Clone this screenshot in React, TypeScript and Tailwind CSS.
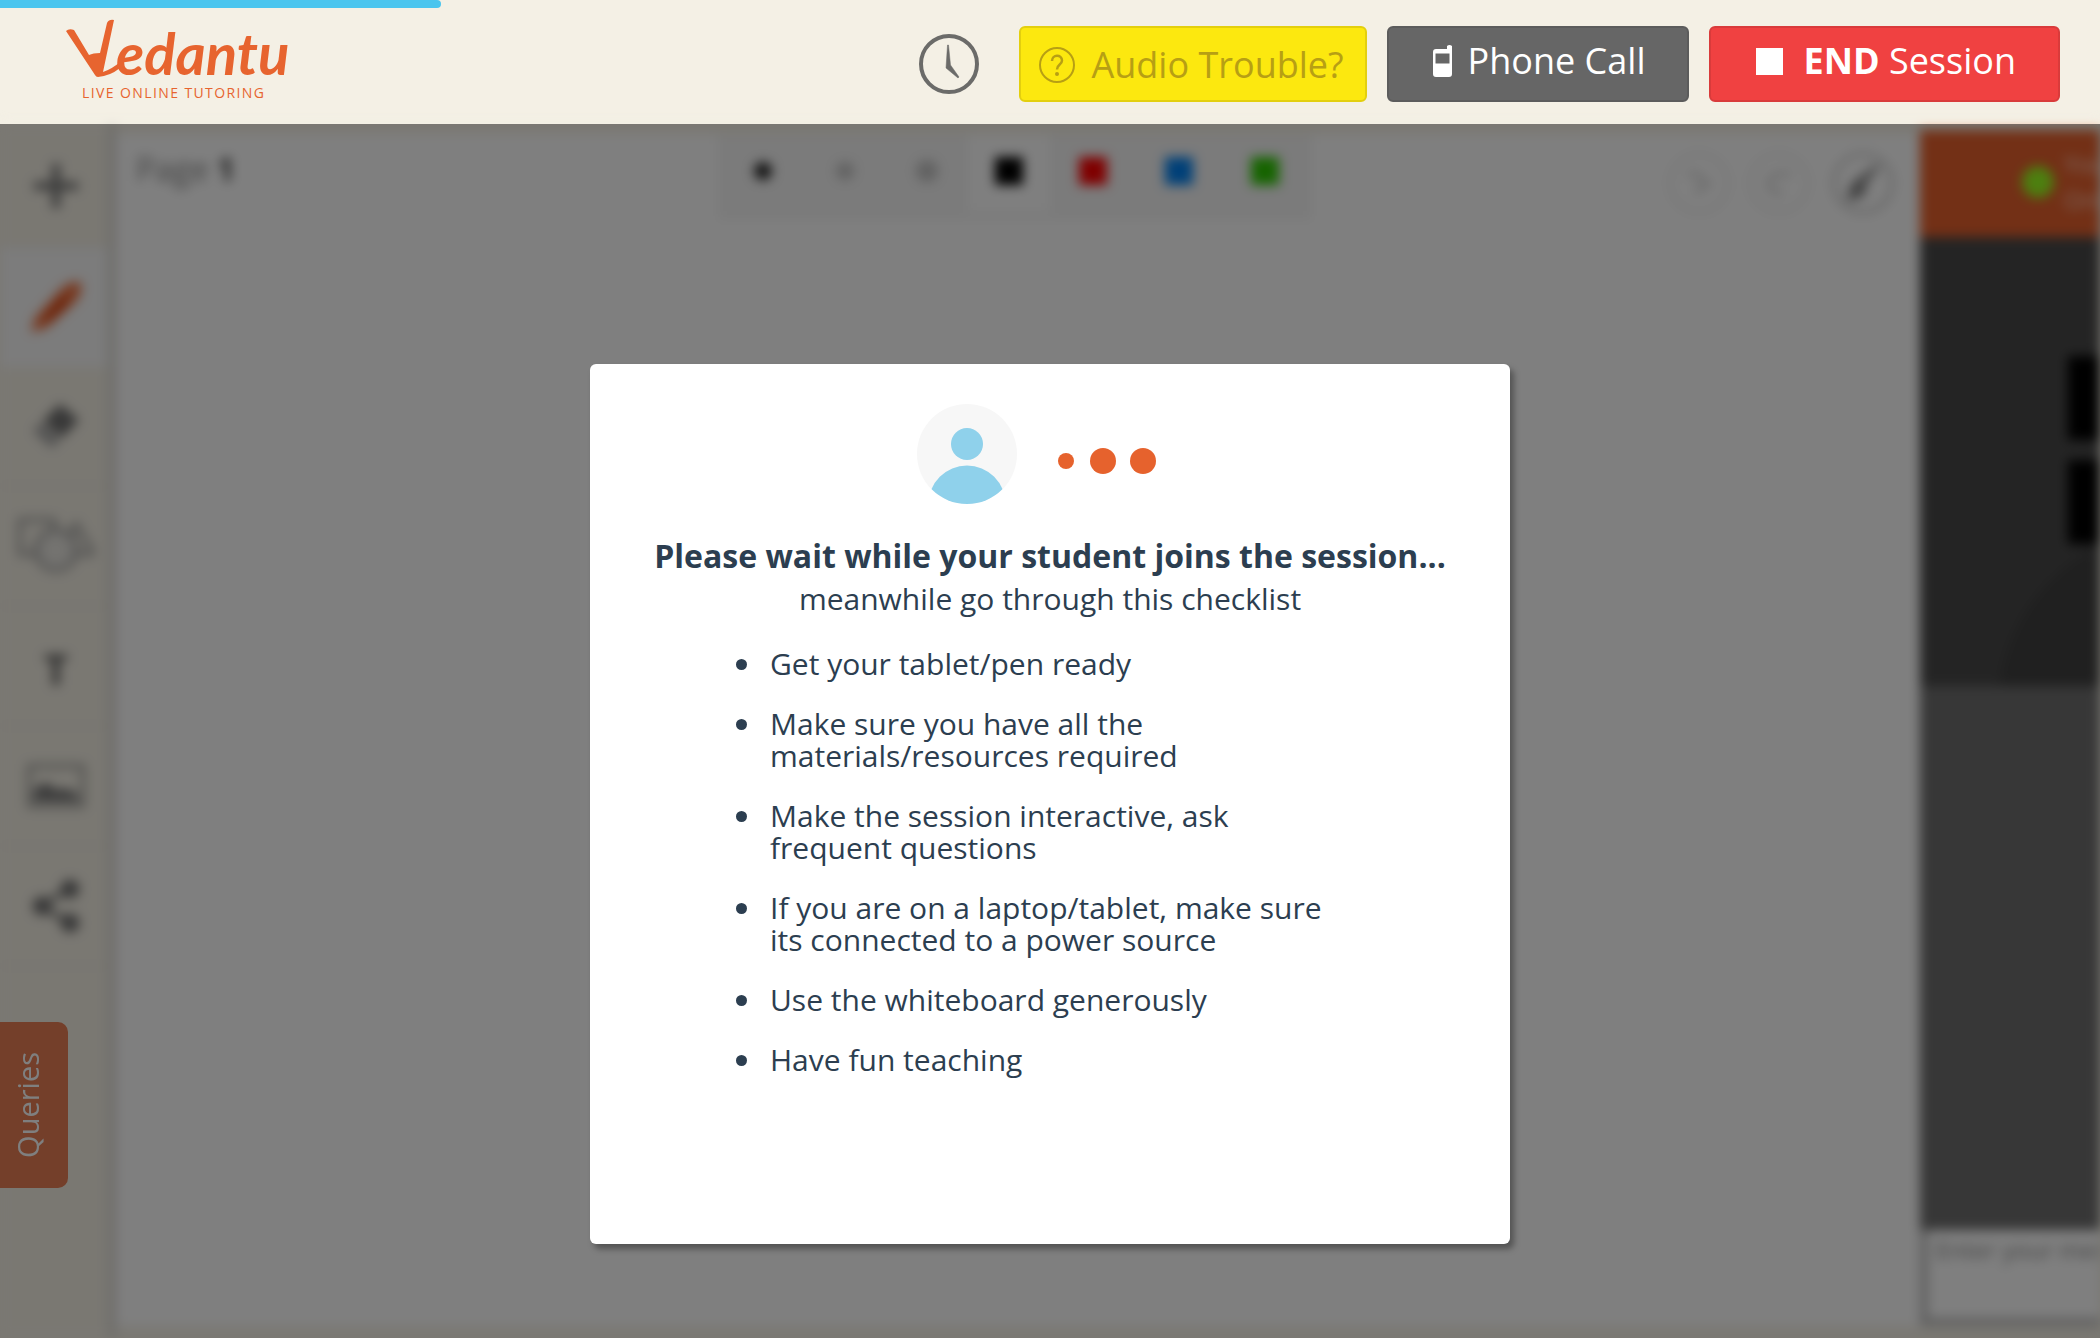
import React from "react";

const steps = [
  "Get your tablet/pen ready",
  "Make sure you have all the materials/resources required",
  "Make the session interactive, ask frequent questions",
  "If you are on a laptop/tablet, make sure its connected to a power source",
  "Use the whiteboard generously",
  "Have fun teaching",
];

function Logo() {
  return (
    <a href="#" aria-label="Vedantu live online tutoring" className="flex flex-col text-[#e7642f]">
      <span className="flex h-16 items-start">
        <svg viewBox="0 0 54 60" className="h-[60px] w-[54px]" fill="currentColor" aria-hidden="true">
          <path d="M0 12 Q3 9 8 11 L23 36 Q27 34 34 34 L41 4 Q43 0 48 1 L37 53 Q46 50 54 43 L54 49 Q44 57 32 58 Q30 58 29 56 Z" />
        </svg>
        <span className="-ml-1 font-[Lato] text-[58px] leading-[68px] font-bold italic">edantu</span>
      </span>
      <span className="pl-4 text-sm leading-5 font-medium tracking-widest">LIVE ONLINE TUTORING</span>
    </a>
  );
}

function ClockIcon() {
  return (
    <svg viewBox="0 0 60 60" className="size-[60px]" aria-hidden="true">
      <circle cx="30" cy="30" r="28" fill="none" stroke="#6b6b69" strokeWidth="4" />
      <path d="M28.500 11 L29.500 11 L31.500 31 L40 43 L39 44 L27 34 Z" fill="#6b6b69" stroke="#6b6b69" strokeWidth="0.500" strokeLinejoin="round" />
    </svg>
  );
}

function Header() {
  return (
    <header className="flex h-[124px] shrink-0 items-start justify-between bg-[#f4f0e5] pr-10 pl-[66px]">
      <div className="pt-[19px]">
        <Logo />
      </div>
      <div className="flex items-center gap-5 pt-[26px]">
        <div className="mr-5">
          <ClockIcon />
        </div>
        <button className="flex h-[76px] items-center gap-4 rounded-md border-2 border-[#e3cf0e] bg-[#fce80f] pt-0.5 pr-[21px] pl-[18px] text-4xl text-[#b79f14]">
          <svg viewBox="0 0 36 36" className="size-9" fill="none" stroke="currentColor" strokeWidth="2" aria-hidden="true">
            <circle cx="18" cy="18" r="17" />
            <path d="M13 14 C13 7 23 7 23 13.500 C23 18 18 17 18 22.500" strokeWidth="2.500" />
            <circle cx="18" cy="27" r="1" />
          </svg>
          Audio Trouble?
        </button>
        <button className="flex h-[76px] items-center gap-4 rounded-md border-2 border-[#5c5c5c] bg-[#666] pr-[42px] pb-1.5 pl-11 text-4xl text-white">
          <svg viewBox="0 0 19 32" className="h-8 w-[19px]" fill="currentColor" aria-hidden="true">
            <path fillRule="evenodd" d="M3 4 H14 V1 Q16.500 -1 19 1 V29 Q19 32 16 32 H3 Q0 32 0 29 V7 Q0 4 3 4 Z M2.500 8.500 V18.500 H16.500 V8.500 Z" />
          </svg>
          Phone Call
        </button>
        <button className="flex h-[76px] items-center gap-5 rounded-md border-2 border-[#d93b3b] bg-[#f04141] pr-[42px] pb-1.5 pl-[45px] text-4xl text-white">
          <span className="size-[27px] bg-white" />
          <span>
            <b>END</b> Session
          </span>
        </button>
      </div>
    </header>
  );
}

function Tool({ label, active, children }: { label: string; active?: boolean; children: React.ReactNode }) {
  return (
    <button
      aria-label={label}
      className={
        active
          ? "flex h-[120px] items-center justify-center bg-[#f8f8f8] pl-1"
          : "flex h-[120px] items-center justify-center border-b-2 border-[#ece8de] pl-1"
      }
    >
      {children}
    </button>
  );
}

function Sidebar() {
  return (
    <nav className="flex w-[116px] shrink-0 flex-col border-r-8 border-[#dcdad4] bg-[#f4f0e5] pt-[3px]">
      <Tool label="Add">
        <svg viewBox="0 0 44 44" className="size-11" fill="none" stroke="#777" strokeWidth="8">
          <path d="M22 0 V44 M0 22 H44" />
        </svg>
      </Tool>
      <Tool label="Pen" active>
        <svg viewBox="0 0 50 50" className="size-[50px]" fill="#f0713f">
          <path d="M0 50 L4 36 L32 5 Q44 -3 50 1 Q53 8 45 19 L15 46 Z" />
          <path d="M13 35 L31 13 L39 21 L19 41 Z" fill="#dc4814" />
        </svg>
      </Tool>
      <Tool label="Eraser">
        <svg viewBox="0 0 46 46" className="size-[46px]">
          <path d="M10 18 L27 1 L46 17 L29 35 Z" fill="#707070" />
          <path d="M8 20 L27 37 L19 45 L0 28 Z" fill="#a5a5a5" />
        </svg>
      </Tool>
      <Tool label="Shapes">
        <svg viewBox="0 0 76 56" className="h-14 w-[76px]" fill="none" stroke="#999" strokeWidth="4">
          <path d="M2 2 H36 V36 H2 Z" />
          <path d="M58 6 L76 36 H42 Z" />
          <circle cx="38" cy="32" r="20" fill="#e8e6e0" />
        </svg>
      </Tool>
      <Tool label="Text">
        <span className="pt-1 text-[42px] font-bold text-[#555]">T</span>
      </Tool>
      <Tool label="Image">
        <svg viewBox="0 0 58 44" className="h-11 w-[58px]">
          <path d="M2 2 H56 V42 H2 Z" fill="none" stroke="#a0a09c" strokeWidth="5" />
          <path d="M7 37 V26 L18 18 L30 26 L38 24 L51 30 V37 Z" fill="#777" />
        </svg>
      </Tool>
      <Tool label="Share">
        <svg viewBox="0 0 52 54" className="h-[54px] w-[52px]" fill="#707070" stroke="#707070">
          <path d="M12 27 L40 9 M12 27 L40 45" strokeWidth="5" />
          <circle cx="12" cy="27" r="9" />
          <circle cx="40" cy="10" r="9" />
          <circle cx="40" cy="44" r="9" />
        </svg>
      </Tool>
    </nav>
  );
}

const tip = "flex w-[82px] items-center justify-center pb-3";
const swatch = "flex w-[86px] items-center justify-center pb-3";
const round = "flex size-[60px] items-center justify-center rounded-full border-2";

function Board() {
  return (
    <section className="min-w-0 flex-1 bg-[#f4f0e5] pt-[10px] pb-3">
      <div className="grid h-full grid-cols-[1fr_auto_1fr] items-start bg-white">
        <p className="pt-3.5 pl-5 text-[32px] leading-[42px] text-[#888]">
          Page <b className="text-[#444]">1</b>
        </p>
        <div className="mr-1.5 flex h-[86px] bg-[#f6f6f6] px-1">
          <button aria-label="Thin" className={tip}><span className="size-[18px] rounded-full bg-[#222]" /></button>
          <button aria-label="Medium" className={tip}><span className="size-[18px] rounded-full bg-[#c4c4c4]" /></button>
          <button aria-label="Thick" className={tip}><span className="size-[22px] rounded-full bg-[#c4c4c4]" /></button>
          <button aria-label="Black" className="flex h-[78px] w-[82px] items-center justify-center bg-white pb-1"><span className="size-7 bg-black" /></button>
          <button aria-label="Red" className={swatch}><span className="size-7 bg-[#ff0000]" /></button>
          <button aria-label="Blue" className={swatch}><span className="size-7 bg-[#0080f0]" /></button>
          <button aria-label="Green" className={swatch}><span className="size-7 bg-[#2cc800]" /></button>
        </div>
        <div className="flex justify-end gap-5 pt-[19px] pr-[27px]">
          <button aria-label="Undo" className={round + " border-[#ddd]"}>
            <svg viewBox="0 0 28 28" className="size-7" fill="none" stroke="#dedede" strokeWidth="6"><path d="M2 5 H12 L23 15 L10 24" /></svg>
          </button>
          <button aria-label="Redo" className={round + " border-[#ddd]"}>
            <svg viewBox="0 0 28 28" className="size-7" fill="none" stroke="#dedede" strokeWidth="6"><path d="M26 5 H12 Q2 8 4 18 Q8 25 18 24" /></svg>
          </button>
          <button aria-label="Brush" className={round + " ml-1 border-[#a0a0a0]"}>
            <svg viewBox="0 0 32 36" className="h-9 w-8" fill="#888"><path d="M32 0 L16 20 L10 16 Z M2 34 Q4 16 12 17 L18 22 Q18 32 2 34 Z" stroke="#888" strokeWidth="3" /></svg>
          </button>
        </div>
      </div>
    </section>
  );
}

function VideoPanel() {
  return (
    <aside className="w-[180px] shrink-0 overflow-hidden bg-[#f4f0e5] pt-1.5 pb-3">
      <div className="flex h-full w-[400px] flex-col bg-[#c0c0c0]">
        <div className="flex h-[107px] items-center gap-2.5 bg-[#e6602c] pb-1 pl-[102px]">
          <span className="size-8 rounded-full bg-[#9aff20]" />
          <p className="text-2xl leading-9 text-[#ffd8c8]">You<br />Online</p>
        </div>
        <div className="flex h-[449px] flex-col gap-5 overflow-hidden bg-[#494949] pt-[119px]">
          <span className="ml-[148px] h-[84px] w-40 shrink-0 bg-black" />
          <span className="ml-[148px] h-[84px] w-40 shrink-0 bg-black" />
          <span className="-mt-9 ml-[78px] size-[360px] shrink-0 rounded-full bg-[#404040]" />
        </div>
        <div className="min-h-0 flex-1 bg-[#6f6f6f]" />
        <textarea
          aria-label="Message"
          placeholder="Enter your message"
          className="mx-2 mb-2 h-[88px] resize-none bg-white px-2 py-1 text-2xl placeholder:text-[#888]"
        />
      </div>
    </aside>
  );
}

function WaitingDialog() {
  return (
    <div role="dialog" aria-labelledby="wait-title" className="w-[920px] rounded-md bg-white pt-10 pb-[168px] text-[#2c3e50] shadow-[4px_5px_6px_rgba(0,0,0,0.35)]">
      <div className="flex items-center justify-center pr-7">
        <svg viewBox="0 0 100 100" className="size-[100px]" aria-hidden="true">
          <clipPath id="avatar"><circle cx="50" cy="50" r="50" /></clipPath>
          <circle cx="50" cy="50" r="50" fill="#f7f7f7" />
          <g fill="#8fd1eb" clipPath="url(#avatar)">
            <circle cx="50" cy="40" r="16" />
            <circle cx="50" cy="100" r="38.500" />
          </g>
        </svg>
        <div className="mt-3.5 ml-[41px] flex items-center gap-[14px]">
          <span className="mr-0.5 size-4 rounded-full bg-[#e6622d]" />
          <span className="size-[26px] rounded-full bg-[#e6622d]" />
          <span className="size-[26px] rounded-full bg-[#e6622d]" />
        </div>
      </div>
      <h1 id="wait-title" className="mt-[30px] text-center text-[32px] leading-[44px] font-bold">Please wait while your student joins the session...</h1>
      <p className="text-center text-[30px] leading-[42px]">meanwhile go through this checklist</p>
      <ul className="mt-7 ml-[174px] flex w-[576px] list-disc flex-col gap-7 text-[30px] leading-8">
        {steps.map((s) => (
          <li key={s} className="pl-1.5">{s}</li>
        ))}
      </ul>
    </div>
  );
}

export default function App() {
  return (
    <div className="flex min-h-screen flex-col overflow-hidden bg-[#f4f0e5] font-['Open_Sans',sans-serif]">
      <div className="relative z-10 h-0">
        <div role="progressbar" aria-label="Session progress" aria-valuenow={21} className="h-2 w-[21%] rounded-r-full bg-[#4ac5ee]" />
      </div>
      <Header />
      <div className="relative flex flex-1 flex-col">
        <main className="flex flex-1 blur-[6px]">
          <Sidebar />
          <Board />
          <VideoPanel />
        </main>
        <button className="absolute bottom-[150px] left-0 flex h-[166px] w-[68px] items-center justify-center rounded-r-[10px] bg-[#e87e54] pr-3 text-[29px] text-white">
          <span className="rotate-180 [writing-mode:vertical-rl]">Queries</span>
        </button>
        <div className="absolute inset-0 flex items-start justify-center bg-black/50 pt-60">
          <WaitingDialog />
        </div>
      </div>
    </div>
  );
}
